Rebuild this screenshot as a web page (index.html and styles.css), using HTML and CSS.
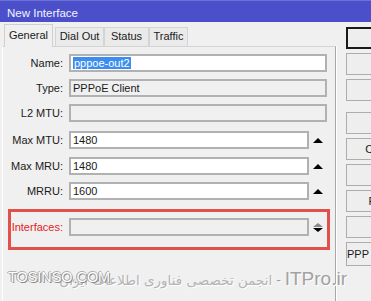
FILE: index.html
```html
<!DOCTYPE html>
<html>
<head>
<meta charset="utf-8">
<link rel="stylesheet" href="styles.css">
</head>
<body>
<div class="window">
  <div class="titlebar">New Interface</div>
  <div class="main">
    <div class="left">
      <div class="tabs">
        <div class="tab active">General</div>
        <div class="tab t-dial">Dial Out</div>
        <div class="tab t-status">Status</div>
        <div class="tab t-traffic">Traffic</div>
      </div>
      <div class="panel">
        <div class="row">
          <div class="label">Name:</div>
          <div class="field white full"><span class="sel">pppoe-out2</span></div>
        </div>
        <div class="row">
          <div class="label">Type:</div>
          <div class="field full">PPPoE Client</div>
        </div>
        <div class="row">
          <div class="label">L2 MTU:</div>
          <div class="field full"></div>
        </div>
        <div class="row r-mtu">
          <div class="label">Max MTU:</div>
          <div class="field white short">1480</div>
          <div class="spin"><span class="up"></span></div>
        </div>
        <div class="row r-mru">
          <div class="label">Max MRU:</div>
          <div class="field white short">1480</div>
          <div class="spin"><span class="up"></span></div>
        </div>
        <div class="row">
          <div class="label">MRRU:</div>
          <div class="field white short">1600</div>
          <div class="spin"><span class="up"></span></div>
        </div>
        <div class="highlight">
          <div class="row">
            <div class="label red">Interfaces:</div>
            <div class="field short"></div>
            <div class="spin updown"><span class="up grey"></span><span class="down"></span></div>
          </div>
        </div>
      </div>
    </div>
    <div class="buttons">
      <div class="btn default">OK</div>
      <div class="btn">Cancel</div>
      <div class="btn">Apply</div>
      <div class="btn gap">Disable</div>
      <div class="btn">Comment</div>
      <div class="btn">Copy</div>
      <div class="btn">Remove</div>
      <div class="btn">Torch</div>
      <div class="btn tall">PPP Scanner</div>
    </div>
  </div>
  <div class="wm-left">TOSINSO.COM</div>
  <div class="wm-right"><span class="fa">انجمن تخصصی فناوری اطلاعات ایران</span><span class="dash"> - </span><span class="itp">ITPro.ir</span></div>
</div>
</body>
</html>
```
FILE: styles.css
```css
html, body {
  margin: 0;
  padding: 0;
}
body {
  width: 371px;
  height: 301px;
  overflow: hidden;
  background: #f0f0f0;
  font-family: "Liberation Sans", Arial, sans-serif;
  font-size: 11px;
  color: #1a1a1a;
}
.window {
  position: relative;
  width: 371px;
  height: 301px;
  overflow: hidden;
}
.titlebar {
  height: 22px;
  box-sizing: border-box;
  padding: 5px 0 0 7px;
  background: #4b4fca;
  border-top: 1px solid #6d70d6;
  color: #f4f4ff;
  font-size: 11.5px;
  line-height: 15px;
}
.main {
  display: flex;
  align-items: flex-start;
}
.left {
  flex: none;
  width: 334px;
  margin-left: 2px;
}
.tabs {
  display: flex;
  align-items: flex-end;
  height: 22px;
  margin-top: 2px;
  padding-left: 2px;
}
.tab {
  height: 19px;
  box-sizing: border-box;
  border: 1px solid #d4d4d4;
  border-bottom: none;
  background: #eaeaea;
  text-align: center;
  line-height: 17px;
  font-size: 11px;
}
.tab.active {
  height: 23px;
  width: 49px;
  margin-bottom: -1px;
  background: #f0f0f0;
  border-color: #d0d0d0;
  line-height: 20px;
  position: relative;
  z-index: 1;
}
.t-dial { width: 49px; margin-left: 2px; }
.t-status { width: 45px; }
.t-traffic { width: 39px; }
.panel {
  height: 255px;
  box-sizing: border-box;
  border-top: 1px solid #d4d4d4;
  border-left: 1px solid #ffffff;
  border-right: 1px solid #a8a8a8;
  box-shadow: 1px 0 0 #ffffff;
  padding-top: 7px;
  display: flex;
  flex-direction: column;
  gap: 7px;
}
.row {
  display: flex;
  align-items: center;
  height: 18px;
}
.r-mtu { margin-top: 2px; }
.r-mru { margin-top: 1px; }
.label {
  width: 60px;
  text-align: right;
  margin-right: 6px;
  white-space: nowrap;
}
.label.red {
  width: 52px;
  color: #e5221e;
}
.field {
  height: 18px;
  box-sizing: border-box;
  border: 2px solid #b1b1b1;
  background: #f0f0f0;
  padding-left: 2px;
  line-height: 14px;
  white-space: nowrap;
  overflow: hidden;
}
.field.white { background: #ffffff; }
.field.full { width: 258px; }
.field.short { width: 240px; }
.sel {
  background: #3b8ef0;
  color: #ffffff;
  padding: 0 1px;
}
.spin {
  width: 18px;
  display: flex;
  flex-direction: column;
  align-items: center;
  justify-content: center;
  gap: 1px;
}
.up {
  width: 0;
  height: 0;
  border-left: 5px solid transparent;
  border-right: 5px solid transparent;
  border-bottom: 5px solid #000;
}
.up.grey { border-bottom-color: #8a8a8a; border-bottom-width: 4px; }
.down {
  width: 0;
  height: 0;
  border-left: 5px solid transparent;
  border-right: 5px solid transparent;
  border-top: 4px solid #000;
}
.highlight {
  margin-top: 2px;
  margin-left: 5px;
  width: 322px;
  box-sizing: border-box;
  border: 3px solid #e0514c;
  padding: 6px 0 11px 0;
}
.buttons {
  flex: none;
  margin-left: 10px;
  margin-top: 5px;
  display: flex;
  flex-direction: column;
  align-items: flex-start;
  gap: 4px;
}
.btn {
  width: 86px;
  height: 22px;
  box-sizing: border-box;
  border: 1px solid #adadad;
  background: #eeeeee;
  text-align: center;
  line-height: 20px;
  white-space: nowrap;
  color: #1a1a1a;
}
.btn.default {
  border: 2px solid #1a1a1a;
  line-height: 18px;
}
.btn.gap { margin-top: 7px; }
.btn.tall { height: 24px; line-height: 22px; width: 66px; }
.wm-left {
  position: absolute;
  left: 8px;
  top: 269px;
  font-size: 14.4px;
  color: #ffffff;
  text-shadow: 1px 1px 0 #8a8a8a, -1px 0 0 #9a9a9a, 0 -1px 0 #b0b0b0;
  z-index: 2;
}
.wm-right {
  position: absolute;
  right: 24px;
  top: 268px;
  white-space: nowrap;
  direction: ltr;
  color: #a0a0a0;
  text-shadow: 1px 1px 0 #ffffff;
}
.wm-right .fa {
  font-family: "DejaVu Sans", sans-serif;
  font-size: 13.5px;
  color: #b4b4b4;
}
.wm-right .dash {
  font-size: 14px;
  color: #a0a0a0;
}
.wm-right .itp {
  font-size: 19px;
  color: #a2a2a2;
}
```
